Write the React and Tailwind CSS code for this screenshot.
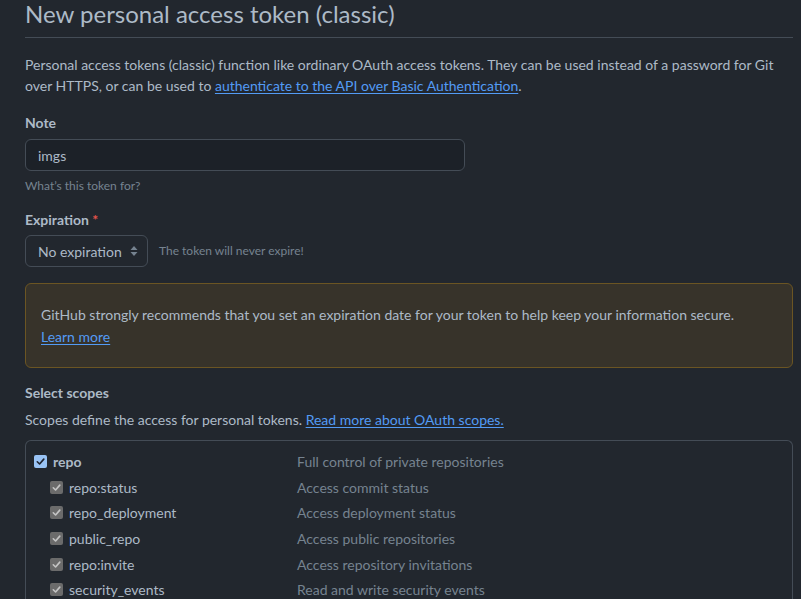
import React from "react";

function Check({ variant }) {
  const primary = variant === "primary";
  return (
    <span
      className={
        "inline-flex h-[13px] w-[13px] shrink-0 items-center justify-center rounded-[2px] " +
        (primary ? "bg-[#99c3f5]" : "bg-[#6b6b6b]")
      }
    >
      <svg width="11" height="11" viewBox="0 0 12 12">
        <path
          d="M2.5 6.3 L5 8.7 L9.6 3.4"
          fill="none"
          stroke={primary ? "#1f2430" : "#c4c4c4"}
          strokeWidth="1.8"
          strokeLinecap="round"
          strokeLinejoin="round"
        />
      </svg>
    </span>
  );
}

const scopes = [
  { name: "repo", desc: "Full control of private repositories", parent: true },
  { name: "repo:status", desc: "Access commit status" },
  { name: "repo_deployment", desc: "Access deployment status" },
  { name: "public_repo", desc: "Access public repositories" },
  { name: "repo:invite", desc: "Access repository invitations" },
  { name: "security_events", desc: "Read and write security events" },
];

export default function App() {
  return (
    <div
      className="min-h-[599px] w-[801px] overflow-hidden bg-[#22272e] text-[14px] leading-[21px] text-[#adbac7]"
      style={{ fontFamily: 'Lato, "Noto Sans", sans-serif' }}
    >
      <div className="-mt-px ml-[25px] w-[768px]">
        <div className="border-b border-[#444c56] pb-2">
          <h1 className="text-[24px] font-normal leading-[30px] text-[#adbac7]">
            New personal access token (classic)
          </h1>
        </div>

        <p className="mt-4">
          Personal access tokens (classic) function like ordinary OAuth access tokens. They can be used instead of a
          password for Git
          <br />
          over HTTPS, or can be used to{" "}
          <a className="text-[#539bf5] underline underline-offset-2">authenticate to the API over Basic Authentication</a>.
        </p>

        <div className="mt-4 font-bold">Note</div>
        <div className="mt-[6px] flex h-[32px] w-[440px] items-center rounded-[6px] border border-[#444c56] bg-[#1c2128] px-3">
          imgs
        </div>
        <div className="mt-[6px] text-[12px] leading-[18px] text-[#768390]">What’s this token for?</div>

        <div className="mt-[14px] font-bold">
          Expiration <span className="text-[#e5534b]">*</span>
        </div>
        <div className="mt-[5px] flex items-center">
          <div className="flex h-[32px] w-[123px] items-center justify-between rounded-[6px] border border-[#444c56] bg-[#22272e] pl-3 pr-[9px]">
            <span className="whitespace-nowrap">No expiration</span>
            <svg width="8" height="12" viewBox="0 0 8 12">
              <path d="M4 1 L7.5 5 H0.5 Z" fill="#768390" />
              <path d="M4 11 L7.5 7 H0.5 Z" fill="#768390" />
            </svg>
          </div>
          <span className="ml-[11px] text-[12px] leading-[18px] text-[#768390]">The token will never expire!</span>
        </div>

        <div className="mt-4 rounded-[6px] border border-[#6b5523] bg-[#37332a] px-[15px] pb-[19px] pt-[20px] leading-[22px]">
          <div className="whitespace-nowrap">
            GitHub strongly recommends that you set an expiration date for your token to help keep your information secure.
          </div>
          <a className="text-[#539bf5] underline underline-offset-2">Learn more</a>
        </div>

        <div className="mt-[14px] font-bold">Select scopes</div>
        <p className="mt-[6px]">
          Scopes define the access for personal tokens.{" "}
          <a className="text-[#539bf5] underline underline-offset-2">Read more about OAuth scopes.</a>
        </p>

        <div className="mt-[10px] rounded-t-[6px] border border-b-0 border-[#444c56] px-2 pt-[8px]">
          {scopes.map((s) => (
            <div key={s.name} className="flex h-[25.6px] items-center">
              <div className={"flex w-[263px] items-center " + (s.parent ? "" : "pl-4")}>
                <Check variant={s.parent ? "primary" : "disabled"} />
                <span className={"ml-[6px] " + (s.parent ? "font-bold" : "")}>{s.name}</span>
              </div>
              <span className="text-[#768390]">{s.desc}</span>
            </div>
          ))}
        </div>
      </div>
    </div>
  );
}
